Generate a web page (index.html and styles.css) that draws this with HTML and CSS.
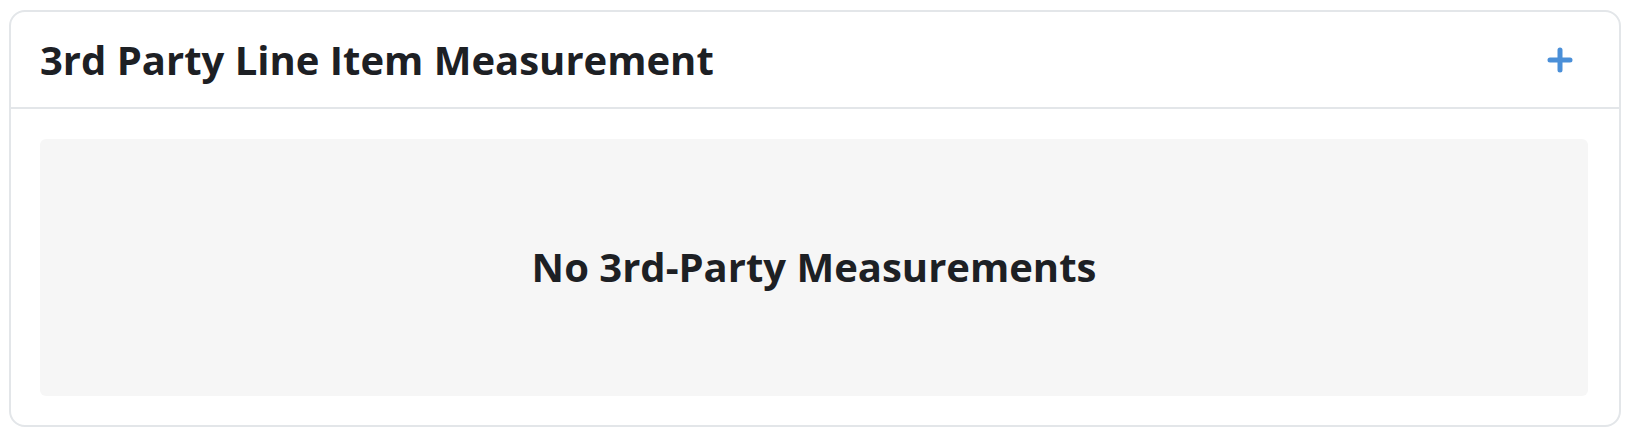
FILE: index.html
```html
<!DOCTYPE html>
<html>
<head>
<meta charset="utf-8">
<link rel="stylesheet" href="styles.css">
</head>
<body>
<div class="card">
  <div class="card-header">
    <h2 class="title">3rd Party Line Item Measurement</h2>
    <button class="add-btn" aria-label="Add">
      <svg width="26" height="26" viewBox="0 0 26 26"><path d="M13 3v20M3 13h20" stroke="#4a8fd8" stroke-width="5" stroke-linecap="round" fill="none"/></svg>
    </button>
  </div>
  <div class="card-body">
    <div class="empty">No 3rd-Party Measurements</div>
  </div>
</div>
</body>
</html>
```
FILE: styles.css
```css
* { box-sizing: border-box; }
html, body { background: #ffffff; }
body {
  margin: 0;
  padding: 10px 11px 9px 9px;
  font-family: "Open Sans", "Noto Sans", sans-serif;
  color: #1d2024;
}
.card {
  border: 2px solid #e3e6e9;
  border-radius: 16px;
  background: #fff;
  height: 417px;
  display: flex;
  flex-direction: column;
}
.card-header {
  height: 97px;
  border-bottom: 2px solid #e3e6e9;
  display: flex;
  align-items: center;
  justify-content: space-between;
  padding: 0 46px 0 29px;
}
.title {
  margin: 0;
  font-size: 40px;
  font-weight: 700;
  line-height: 1;
  letter-spacing: 0;
}
.add-btn {
  border: 0;
  background: none;
  padding: 0;
  width: 26px;
  height: 26px;
  display: flex;
}
.card-body {
  flex: 1;
  padding: 30px 31px 29px 29px;
  display: flex;
}
.empty {
  flex: 1;
  background: #f6f6f6;
  border-radius: 6px;
  display: flex;
  align-items: center;
  justify-content: center;
  font-size: 40px;
  font-weight: 700;
  padding-bottom: 2px;
}
```
